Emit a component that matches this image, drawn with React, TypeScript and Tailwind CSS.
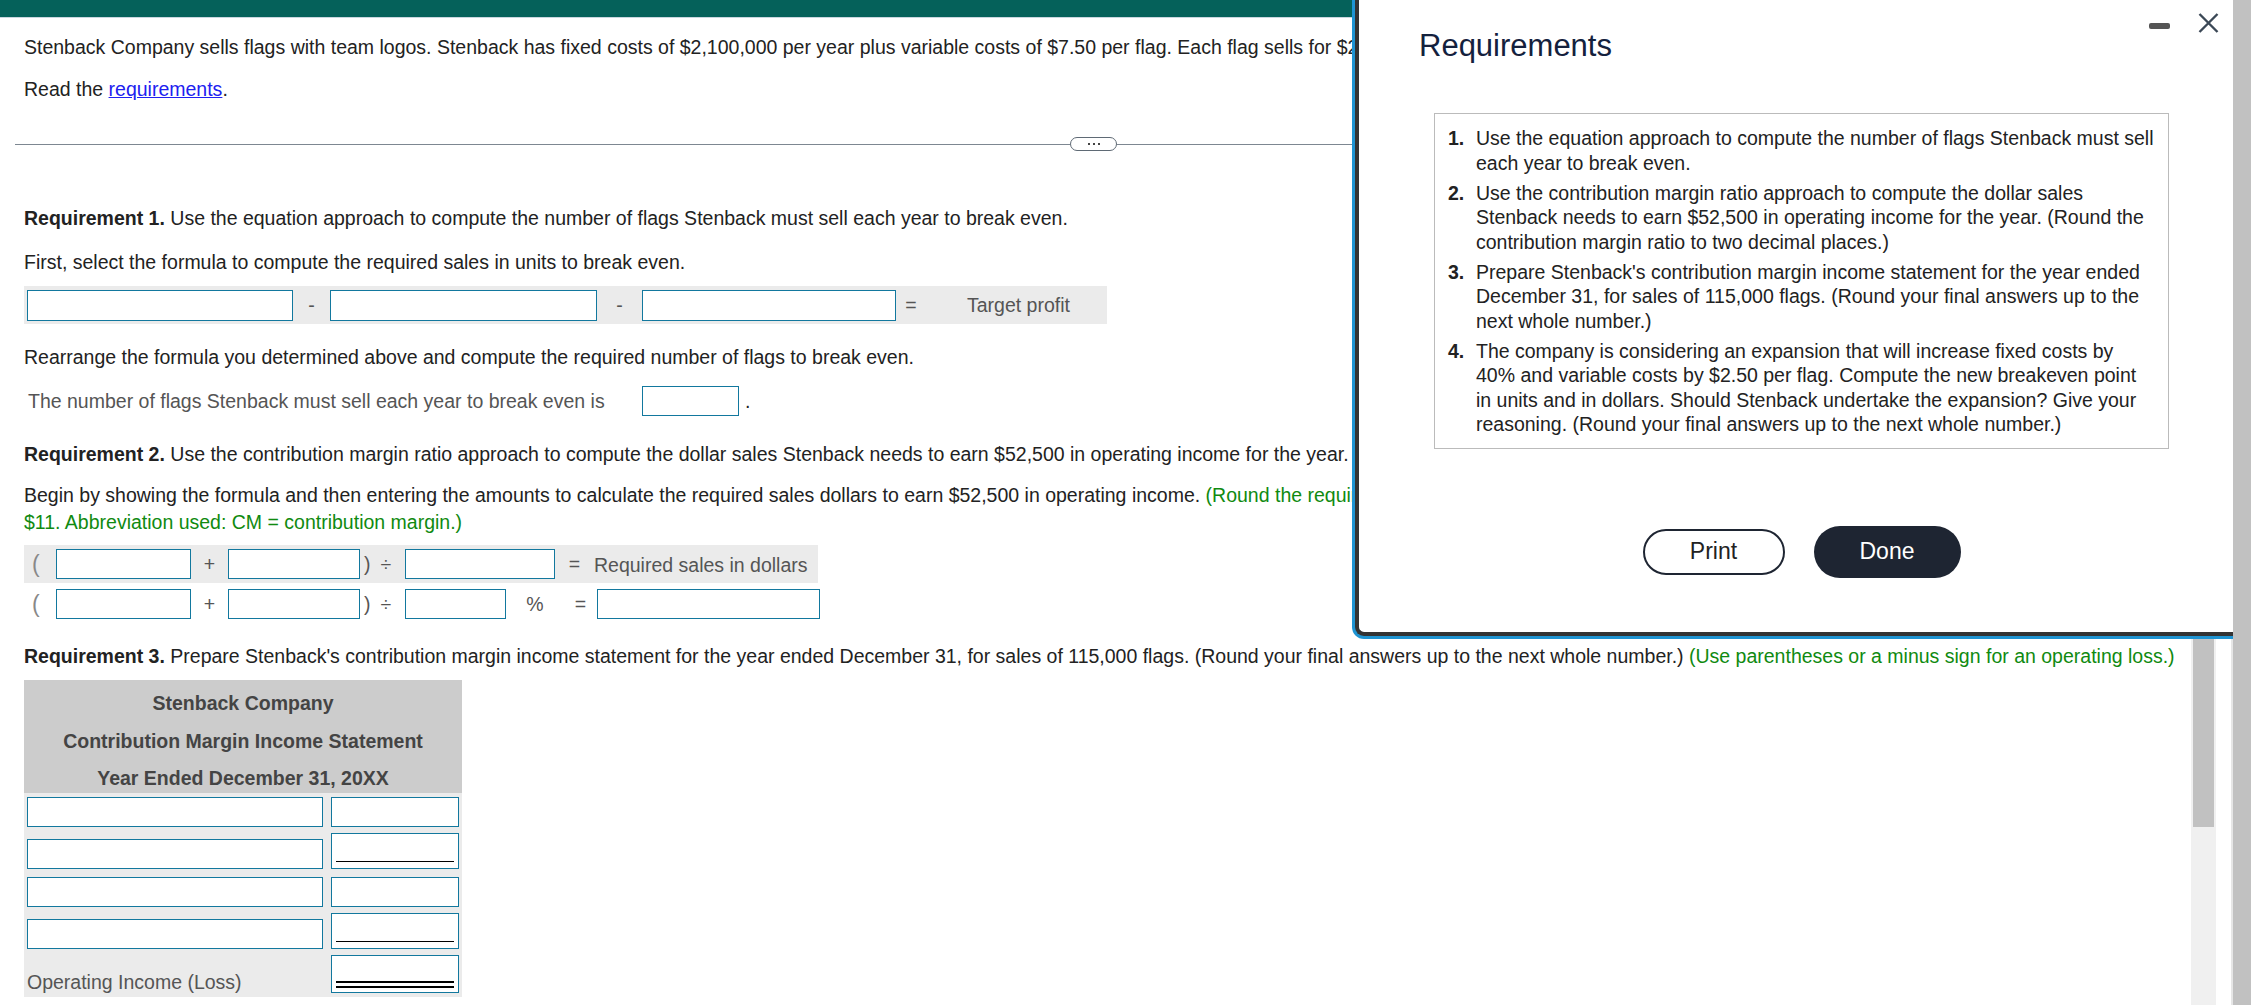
import React from "react";

const inp = "bg-white border border-[#12789e] shrink-0";

function Input({ w, h = 30, className = "" }: { w: number; h?: number; className?: string }) {
  return <div className={`${inp} ${className}`} style={{ width: w, height: h }} />;
}

export default function App() {
  return (
    <div className="relative w-[2251px] h-[1005px] overflow-hidden bg-white flex font-['Liberation_Sans',Arial,sans-serif]">
      {/* Main content */}
      <div className="w-[2191px] shrink-0 h-full overflow-hidden">
        <div className="h-[17px] bg-[#05615a]" />
        <div className="h-px bg-[#c9d6de]" />
        <div className="pl-[24px] text-[19.5px] leading-[26px] text-[#222]">
          <p className="mt-[16px] whitespace-nowrap">
            Stenback Company sells flags with team logos. Stenback has fixed costs of $2,100,000 per year plus variable costs of $7.50 per flag. Each flag sells for $22.50.
          </p>
          <p className="mt-[16px]">
            Read the <span className="text-[#2020f0] underline">requirements</span>.
          </p>
          <div className="mt-[35px] -ml-[9px] flex items-center h-[14px]">
            <div className="w-[1055px] h-px bg-[#7d8791]" />
            <div className="w-[47px] h-[14px] border border-[#5f6a75] rounded-[7px] bg-white flex items-center justify-center gap-[3px]">
              <div className="w-[2px] h-[2px] bg-[#444]" />
              <div className="w-[2px] h-[2px] bg-[#444]" />
              <div className="w-[2px] h-[2px] bg-[#444]" />
            </div>
            <div className="flex-1 h-px bg-[#7d8791]" />
          </div>

          <p className="mt-[54px] whitespace-nowrap">
            <span className="font-bold">Requirement 1.</span> Use the equation approach to compute the number of flags Stenback must sell each year to break even.
          </p>
          <p className="mt-[18px]">First, select the formula to compute the required sales in units to break even.</p>
          <div className="mt-[11px] w-[1083px] h-[38px] bg-[#ebebeb] flex items-center pl-[3px] text-[#555]">
            <Input w={266} h={31} />
            <span className="w-[37px] text-center">-</span>
            <Input w={267} h={31} />
            <span className="w-[45px] text-center">-</span>
            <Input w={254} h={31} />
            <span className="w-[30px] text-center">=</span>
            <span className="ml-[41px]">Target profit</span>
          </div>
          <p className="mt-[20px]">Rearrange the formula you determined above and compute the required number of flags to break even.</p>
          <div className="mt-[16px] flex items-center h-[30px]">
            <span className="w-[618px] pl-[4px] text-[#555] whitespace-nowrap">The number of flags Stenback must sell each year to break even is</span>
            <Input w={97} />
            <span className="ml-[6px]">.</span>
          </div>

          <p className="mt-[25px] whitespace-nowrap">
            <span className="font-bold">Requirement 2.</span> Use the contribution margin ratio approach to compute the dollar sales Stenback needs to earn $52,500 in operating income for the year.
          </p>
          <p className="mt-[15px] leading-[27px] whitespace-nowrap">
            Begin by showing the formula and then entering the amounts to calculate the required sales dollars to earn $52,500 in operating income.{" "}
            <span className="text-[#108a10]">(Round the required contribution margin ratio to two decimal places. Assume a sale price per flag of</span>
            <br />
            <span className="text-[#108a10]">$11. Abbreviation used: CM = contribution margin.)</span>
          </p>
          <div className="mt-[9px] w-[794px] h-[38px] bg-[#ebebeb] flex items-center text-[#555]">
            <span className="w-[32px] pl-[8px] text-[23px] text-[#888]">(</span>
            <Input w={135} />
            <span className="w-[37px] text-center">+</span>
            <Input w={132} />
            <span className="w-[45px] flex">
              <span className="pl-[4px]">)</span>
              <span className="ml-[10px]">÷</span>
            </span>
            <Input w={150} />
            <span className="w-[39px] text-center">=</span>
            <span className="pt-[2px]">Required sales in dollars</span>
          </div>
          <div className="mt-[6px] h-[30px] flex items-center text-[#555]">
            <span className="w-[32px] pl-[8px] text-[23px] text-[#888]">(</span>
            <Input w={135} />
            <span className="w-[37px] text-center">+</span>
            <Input w={132} />
            <span className="w-[45px] flex">
              <span className="pl-[4px]">)</span>
              <span className="ml-[10px]">÷</span>
            </span>
            <Input w={101} />
            <span className="w-[58px] text-center">%</span>
            <span className="w-[33px] text-center">=</span>
            <Input w={223} />
          </div>

          <p className="mt-[24px] whitespace-nowrap">
            <span className="font-bold">Requirement 3.</span> Prepare Stenback's contribution margin income statement for the year ended December 31, for sales of 115,000 flags. (Round your final answers up to the next whole number.){" "}
            <span className="text-[#108a10]">(Use parentheses or a minus sign for an operating loss.)</span>
          </p>

          <div className="mt-[11px] w-[438px]">
            <div className="bg-[#cccccc] pt-[10px] pb-[2px] flex flex-col gap-[11.5px] items-center font-bold text-[#444]">
              <div>Stenback Company</div>
              <div>Contribution Margin Income Statement</div>
              <div>Year Ended December 31, 20XX</div>
            </div>
            <div className="bg-[#ebebeb] pt-[4px] pb-[4px] px-[3px] flex flex-col">
              <div className="flex items-end gap-[8px] h-[30px]">
                <Input w={296} />
                <Input w={128} />
              </div>
              <div className="mt-[6px] flex items-end gap-[8px] h-[36px]">
                <Input w={296} />
                <div className={`${inp} relative w-[128px] h-[36px]`}>
                  <div className="absolute left-[4px] right-[4px] top-[27px] h-px bg-black" />
                </div>
              </div>
              <div className="mt-[8px] flex items-end gap-[8px] h-[30px]">
                <Input w={296} />
                <Input w={128} />
              </div>
              <div className="mt-[6px] flex items-end gap-[8px] h-[36px]">
                <Input w={296} />
                <div className={`${inp} relative w-[128px] h-[36px]`}>
                  <div className="absolute left-[4px] right-[4px] top-[27px] h-px bg-black" />
                </div>
              </div>
              <div className="mt-[6px] flex items-start gap-[8px] h-[38px]">
                <span className="w-[296px] mt-[14px] text-[#555] whitespace-nowrap">Operating Income (Loss)</span>
                <div className={`${inp} relative w-[128px] h-[38px]`}>
                  <div className="absolute left-[4px] right-[4px] top-[25px] h-[2px] bg-black" />
                  <div className="absolute left-[4px] right-[4px] top-[30px] h-[2px] bg-black" />
                </div>
              </div>
            </div>
          </div>
        </div>
      </div>

      {/* inner scrollbar */}
      <div className="w-[25px] shrink-0 h-full bg-[#f0f0f0] pl-[2px]">
        <div className="w-[21px] h-[827px] bg-[#c1c1c1]" />
      </div>
      <div className="w-[15px] shrink-0 h-full bg-white" />
      <div className="w-[2px] shrink-0 h-full bg-[#e6e6e6]" />
      <div className="w-[18px] shrink-0 h-full bg-[#c1c1c1]" />

      {/* Modal */}
      <div className="absolute left-[1352px] top-0 w-[881px] h-[639px] bg-[#1f94d2] pl-[3px] pb-[3px] rounded-bl-[12px]">
        <div className="relative w-full h-full bg-white border-l-4 border-b-4 border-[#333] rounded-bl-[9px]">
          <div className="absolute left-[790px] top-[23px] w-[21px] h-[6px] rounded-[2px] bg-[#555]" />
          <svg className="absolute left-[839px] top-[13px]" width="21" height="20" viewBox="0 0 21 20">
            <path d="M1.5 1 L19.5 19 M19.5 1 L1.5 19" stroke="#3b4856" strokeWidth="2.4" fill="none" />
          </svg>
          <div className="pt-[28px] pl-[60px] text-[31px] leading-[36px] text-[#14213d]">Requirements</div>
          <div className="ml-[75px] mt-[49px] w-[735px] border border-[#bbbbbb] pt-[12px] pb-[11px] pl-[13px] pr-[8px] text-[19.5px] leading-[24.5px] text-[#222]">
            <ol className="flex flex-col gap-[5.5px]">
              <li className="flex">
                <span className="w-[28px] font-bold shrink-0">1.</span>
                <span className="whitespace-nowrap">
                  Use the equation approach to compute the number of flags Stenback must sell
                  <br />
                  each year to break even.
                </span>
              </li>
              <li className="flex">
                <span className="w-[28px] font-bold shrink-0">2.</span>
                <span className="whitespace-nowrap">
                  Use the contribution margin ratio approach to compute the dollar sales
                  <br />
                  Stenback needs to earn $52,500 in operating income for the year. (Round the
                  <br />
                  contribution margin ratio to two decimal places.)
                </span>
              </li>
              <li className="flex">
                <span className="w-[28px] font-bold shrink-0">3.</span>
                <span className="whitespace-nowrap">
                  Prepare Stenback's contribution margin income statement for the year ended
                  <br />
                  December 31, for sales of 115,000 flags. (Round your final answers up to the
                  <br />
                  next whole number.)
                </span>
              </li>
              <li className="flex">
                <span className="w-[28px] font-bold shrink-0">4.</span>
                <span className="whitespace-nowrap">
                  The company is considering an expansion that will increase fixed costs by
                  <br />
                  40% and variable costs by $2.50 per flag. Compute the new breakeven point
                  <br />
                  in units and in dollars. Should Stenback undertake the expansion? Give your
                  <br />
                  reasoning. (Round your final answers up to the next whole number.)
                </span>
              </li>
            </ol>
          </div>
          <div className="ml-[75px] w-[735px] mt-[77px] flex items-center justify-center gap-[29px]">
            <div className="w-[142px] h-[46px] rounded-full border-2 border-[#1e2532] flex items-center justify-center text-[23px] text-[#222]">
              Print
            </div>
            <div className="w-[147px] h-[52px] rounded-full bg-[#1e2532] flex items-center justify-center text-[23px] text-white">
              Done
            </div>
          </div>
        </div>
      </div>
    </div>
  );
}
